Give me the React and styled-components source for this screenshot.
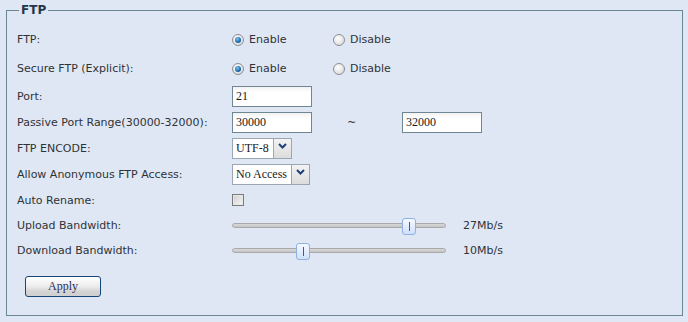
import React from "react";
import styled, { createGlobalStyle } from "styled-components";

const GlobalStyle = createGlobalStyle`
  html, body {
    margin: 0;
    padding: 0;
    background: #dfe7f5;
  }
  body {
    font-family: "DejaVu Sans", Tahoma, sans-serif;
    font-size: 11px;
    color: #2f3336;
  }
`;

const Page = styled.div`
  width: 688px;
  height: 322px;
  padding-top: 3px;
  box-sizing: border-box;
`;

const Fieldset = styled.fieldset`
  margin: 0 5px 0 6px;
  padding: 8px 10px 18px 10px;
  border: 1px solid #6b8693;
  min-width: 0;
`;

const Legend = styled.legend`
  margin-left: 2px;
  padding: 0 2px;
  font-weight: bold;
  font-size: 12px;
  line-height: 14px;
  color: #22384a;
`;

const Row = styled.div`
  display: grid;
  grid-template-columns: 215px 1fr;
  align-items: center;
  height: ${(p) => p.h}px;
`;

const Label = styled.div`
  white-space: nowrap;
`;

const Controls = styled.div`
  display: flex;
  align-items: center;
`;

const RadioOption = styled.label`
  display: flex;
  align-items: center;
  gap: 5px;
  width: ${(p) => p.w}px;
`;

const RadioDot = styled.span`
  width: 10px;
  height: 10px;
  border-radius: 50%;
  border: 1px solid #8a8f96;
  background: radial-gradient(circle at 40% 35%, #ffffff 0%, #e4e4e4 60%, #c9c9c9 100%);
  display: flex;
  align-items: center;
  justify-content: center;
  &::after {
    content: "";
    display: ${(p) => (p.checked ? "block" : "none")};
    width: 6px;
    height: 6px;
    border-radius: 50%;
    background: radial-gradient(circle at 40% 35%, #7fc4f0 0%, #1f6fb3 55%, #0d3a66 100%);
  }
`;

const TextBox = styled.div`
  width: 75px;
  height: 19px;
  border: 1px solid #6f8694;
  background: linear-gradient(#f1f1f1, #ffffff 5px);
  font-family: "Liberation Serif", "Times New Roman", serif;
  font-size: 12px;
  color: #1a1a1a;
  display: flex;
  align-items: center;
  padding-left: 3px;
  box-sizing: content-box;
`;

const Tilde = styled.span`
  width: 90px;
  padding-left: 35px;
  box-sizing: border-box;
  font-size: 11px;
`;

const Select = styled.div`
  display: flex;
  height: 19px;
  border: 1px solid #9aa7b3;
  background: #fff;
`;

const SelectValue = styled.div`
  width: ${(p) => p.w}px;
  border-right: 1px solid #9aa7b3;
  font-family: "Liberation Serif", "Times New Roman", serif;
  font-size: 12px;
  color: #1a1a1a;
  display: flex;
  align-items: center;
  padding-left: 3px;
`;

const SelectArrow = styled.div`
  width: 17px;
  background: linear-gradient(#f3f3f3, #dcdcdc);
  display: flex;
  align-items: flex-start;
  justify-content: center;
  padding-top: 4px;
  box-sizing: border-box;
`;

const CheckBox = styled.span`
  width: 10px;
  height: 10px;
  border: 1px solid #7b7b7b;
  background: linear-gradient(135deg, #cfcfcf, #f6f6f6);
  box-shadow: inset 0 0 0 1px #e8e8e8;
`;

const Track = styled.div`
  position: relative;
  width: 214px;
  height: 5px;
  border-radius: 3px;
  border: 1px solid #a9a9a9;
  background: linear-gradient(#d8d8d8, #c4c4c4);
  box-sizing: border-box;
`;

const Thumb = styled.span`
  position: absolute;
  top: -6px;
  width: 12px;
  height: 15px;
  border: 1px solid #8fb0e0;
  border-radius: 3px;
  background: linear-gradient(#f5f9ff, #cfe0fb);
  display: flex;
  justify-content: center;
  align-items: center;
  &::after {
    content: "";
    width: 1px;
    height: 9px;
    background: #3a5c94;
  }
`;

const Value = styled.span`
  margin-left: 17px;
`;

const Button = styled.button`
  margin-top: 13px;
  margin-left: 8px;
  width: 76px;
  height: 21px;
  border: 1px solid #16457a;
  border-radius: 3px;
  background: linear-gradient(#ffffff 0%, #ececec 50%, #d4d4d4 75%, #cfcfcf 100%);
  font-family: "Liberation Serif", "Times New Roman", serif;
  font-size: 12px;
  color: #2a2a5a;
  padding: 0;
`;

const Chevron = () => (
  <svg width="9" height="6" viewBox="0 0 9 6">
    <path d="M1 1 L4.5 4.5 L8 1" fill="none" stroke="#1e3f7a" strokeWidth="2" />
  </svg>
);

const Radio = ({ checked, label, w }) => (
  <RadioOption w={w}>
    <RadioDot checked={checked} />
    {label}
  </RadioOption>
);

const Slider = ({ pos, value }) => (
  <Controls>
    <Track>
      <Thumb style={{ left: pos }} />
    </Track>
    <Value>{value}</Value>
  </Controls>
);

export default function App() {
  return (
    <Page>
      <GlobalStyle />
      <Fieldset>
        <Legend>FTP</Legend>
        <Row h={29}>
          <Label>FTP:</Label>
          <Controls>
            <Radio checked label="Enable" w={101} />
            <Radio label="Disable" />
          </Controls>
        </Row>
        <Row h={29}>
          <Label>Secure FTP (Explicit):</Label>
          <Controls>
            <Radio checked label="Enable" w={101} />
            <Radio label="Disable" />
          </Controls>
        </Row>
        <Row h={26}>
          <Label>Port:</Label>
          <Controls>
            <TextBox>21</TextBox>
          </Controls>
        </Row>
        <Row h={26}>
          <Label>Passive Port Range(30000-32000):</Label>
          <Controls>
            <TextBox>30000</TextBox>
            <Tilde>~</Tilde>
            <TextBox>32000</TextBox>
          </Controls>
        </Row>
        <Row h={26}>
          <Label>FTP ENCODE:</Label>
          <Controls>
            <Select>
              <SelectValue w={37}>UTF-8</SelectValue>
              <SelectArrow>
                <Chevron />
              </SelectArrow>
            </Select>
          </Controls>
        </Row>
        <Row h={26}>
          <Label>Allow Anonymous FTP Access:</Label>
          <Controls>
            <Select>
              <SelectValue w={55}>No Access</SelectValue>
              <SelectArrow>
                <Chevron />
              </SelectArrow>
            </Select>
          </Controls>
        </Row>
        <Row h={26}>
          <Label>Auto Rename:</Label>
          <Controls>
            <CheckBox />
          </Controls>
        </Row>
        <Row h={24}>
          <Label>Upload Bandwidth:</Label>
          <Slider pos={169} value="27Mb/s" />
        </Row>
        <Row h={26}>
          <Label>Download Bandwidth:</Label>
          <Slider pos={63} value="10Mb/s" />
        </Row>
        <Button>Apply</Button>
      </Fieldset>
    </Page>
  );
}
